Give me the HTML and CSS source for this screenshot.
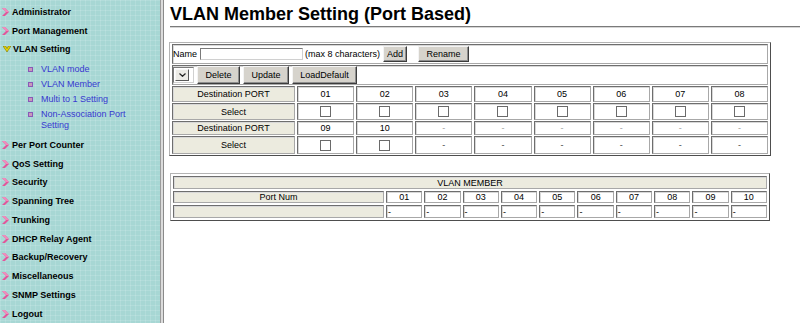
FILE: index.html
```html
<!DOCTYPE html>
<html>
<head>
<meta charset="utf-8">
<title>VLAN Member Setting (Port Based)</title>
<link rel="stylesheet" href="styles.css">
</head>
<body>
<div class="page">
  <nav class="sidebar">
    <ul class="menu">
      <li class="item"><svg class="arrow" viewBox="0 0 7 8" width="7" height="8"><polygon points="0,0 3,0 7,4 3,8 0,8 4,4" fill="#e2569a"/><polygon points="0,0 3,0 7,4 4,4" fill="#f08cbc"/></svg><span>Administrator</span></li>
      <li class="item"><svg class="arrow" viewBox="0 0 7 8" width="7" height="8"><polygon points="0,0 3,0 7,4 3,8 0,8 4,4" fill="#e2569a"/><polygon points="0,0 3,0 7,4 4,4" fill="#f08cbc"/></svg><span>Port Management</span></li>
      <li class="group">
        <div class="item"><svg class="arrow down" viewBox="0 0 8 6" width="8" height="6"><polygon points="0,0 2.6,0 4,2.6 5.4,0 8,0 4,6" fill="#e8da00" stroke="#7a6c00" stroke-width="0.6"/></svg><span>VLAN Setting</span></div>
        <ul class="sub">
          <li class="sub-item"><span class="bullet"></span><span class="sub-text">VLAN mode</span></li>
          <li class="sub-item"><span class="bullet"></span><span class="sub-text">VLAN Member</span></li>
          <li class="sub-item"><span class="bullet"></span><span class="sub-text">Multi to 1 Setting</span></li>
          <li class="sub-item"><span class="bullet"></span><span class="sub-text">Non-Association Port Setting</span></li>
        </ul>
      </li>
      <li class="item"><svg class="arrow" viewBox="0 0 7 8" width="7" height="8"><polygon points="0,0 3,0 7,4 3,8 0,8 4,4" fill="#e2569a"/><polygon points="0,0 3,0 7,4 4,4" fill="#f08cbc"/></svg><span>Per Port Counter</span></li>
      <li class="item"><svg class="arrow" viewBox="0 0 7 8" width="7" height="8"><polygon points="0,0 3,0 7,4 3,8 0,8 4,4" fill="#e2569a"/><polygon points="0,0 3,0 7,4 4,4" fill="#f08cbc"/></svg><span>QoS Setting</span></li>
      <li class="item"><svg class="arrow" viewBox="0 0 7 8" width="7" height="8"><polygon points="0,0 3,0 7,4 3,8 0,8 4,4" fill="#e2569a"/><polygon points="0,0 3,0 7,4 4,4" fill="#f08cbc"/></svg><span>Security</span></li>
      <li class="item"><svg class="arrow" viewBox="0 0 7 8" width="7" height="8"><polygon points="0,0 3,0 7,4 3,8 0,8 4,4" fill="#e2569a"/><polygon points="0,0 3,0 7,4 4,4" fill="#f08cbc"/></svg><span>Spanning Tree</span></li>
      <li class="item"><svg class="arrow" viewBox="0 0 7 8" width="7" height="8"><polygon points="0,0 3,0 7,4 3,8 0,8 4,4" fill="#e2569a"/><polygon points="0,0 3,0 7,4 4,4" fill="#f08cbc"/></svg><span>Trunking</span></li>
      <li class="item"><svg class="arrow" viewBox="0 0 7 8" width="7" height="8"><polygon points="0,0 3,0 7,4 3,8 0,8 4,4" fill="#e2569a"/><polygon points="0,0 3,0 7,4 4,4" fill="#f08cbc"/></svg><span>DHCP Relay Agent</span></li>
      <li class="item"><svg class="arrow" viewBox="0 0 7 8" width="7" height="8"><polygon points="0,0 3,0 7,4 3,8 0,8 4,4" fill="#e2569a"/><polygon points="0,0 3,0 7,4 4,4" fill="#f08cbc"/></svg><span>Backup/Recovery</span></li>
      <li class="item"><svg class="arrow" viewBox="0 0 7 8" width="7" height="8"><polygon points="0,0 3,0 7,4 3,8 0,8 4,4" fill="#e2569a"/><polygon points="0,0 3,0 7,4 4,4" fill="#f08cbc"/></svg><span>Miscellaneous</span></li>
      <li class="item"><svg class="arrow" viewBox="0 0 7 8" width="7" height="8"><polygon points="0,0 3,0 7,4 3,8 0,8 4,4" fill="#e2569a"/><polygon points="0,0 3,0 7,4 4,4" fill="#f08cbc"/></svg><span>SNMP Settings</span></li>
      <li class="item"><svg class="arrow" viewBox="0 0 7 8" width="7" height="8"><polygon points="0,0 3,0 7,4 3,8 0,8 4,4" fill="#e2569a"/><polygon points="0,0 3,0 7,4 4,4" fill="#f08cbc"/></svg><span>Logout</span></li>
    </ul>
  </nav>
  <div class="divider"></div>
  <main class="main">
    <h1 class="title">VLAN Member Setting (Port Based)</h1>
    <hr class="rule">

    <table class="grid grid-setting">
      <colgroup><col class="col-label1"><col span="8"></colgroup>
      <tr class="r1">
        <td colspan="9" class="bar">
          <div class="toolbar">
            <span class="lbl">Name</span>
            <input type="text" class="name-input">
            <span class="hint">(max 8 characters)</span>
            <button class="btn btn-add">Add</button>
            <button class="btn btn-rename">Rename</button>
          </div>
        </td>
      </tr>
      <tr class="r2">
        <td colspan="9" class="bar">
          <div class="toolbar">
            <span class="select-box"><span class="select-btn"><svg viewBox="0 0 7 4" width="7" height="4"><polyline points="0.5,0.5 3.5,3.3 6.5,0.5" fill="none" stroke="#222" stroke-width="1.2"/></svg></span></span>
            <button class="btn btn-delete">Delete</button>
            <button class="btn btn-update">Update</button>
            <button class="btn btn-load">LoadDefault</button>
          </div>
        </td>
      </tr>
      <tr class="r3">
        <td class="label">Destination PORT</td>
        <td>01</td><td>02</td><td>03</td><td>04</td><td>05</td><td>06</td><td>07</td><td>08</td>
      </tr>
      <tr class="r4">
        <td class="label">Select</td>
        <td><input type="checkbox" class="chk"></td>
        <td><input type="checkbox" class="chk"></td>
        <td><input type="checkbox" class="chk"></td>
        <td><input type="checkbox" class="chk"></td>
        <td><input type="checkbox" class="chk"></td>
        <td><input type="checkbox" class="chk"></td>
        <td><input type="checkbox" class="chk"></td>
        <td><input type="checkbox" class="chk"></td>
      </tr>
      <tr class="r5">
        <td class="label">Destination PORT</td>
        <td>09</td><td>10</td>
        <td class="dash-light">-</td><td class="dash-light">-</td><td class="dash-light">-</td><td class="dash-light">-</td><td class="dash-light">-</td><td class="dash-light">-</td>
      </tr>
      <tr class="r6">
        <td class="label">Select</td>
        <td><input type="checkbox" class="chk"></td>
        <td><input type="checkbox" class="chk"></td>
        <td class="dash">-</td><td class="dash">-</td><td class="dash">-</td><td class="dash">-</td><td class="dash">-</td><td class="dash">-</td>
      </tr>
    </table>

    <table class="grid grid-member">
      <colgroup><col class="col-label2"><col span="10"></colgroup>
      <tr class="m1"><td colspan="11" class="label">VLAN MEMBER</td></tr>
      <tr class="m2">
        <td class="label">Port Num</td>
        <td>01</td><td>02</td><td>03</td><td>04</td><td>05</td><td>06</td><td>07</td><td>08</td><td>09</td><td>10</td>
      </tr>
      <tr class="m3">
        <td class="label"></td>
        <td class="left">-</td><td class="left">-</td><td class="left">-</td><td class="left">-</td><td class="left">-</td><td class="left">-</td><td class="left">-</td><td class="left">-</td><td class="left">-</td><td class="left">-</td>
      </tr>
    </table>
  </main>
</div>
</body>
</html>
```

FILE: styles.css
```css
html, body {
  margin: 0;
  padding: 0;
  background: #ffffff;
  font-family: "Liberation Sans", Arial, sans-serif;
  color: #000;
}

.page {
  display: flex;
  min-height: 100vh;
}

/* ---------- sidebar ---------- */
.sidebar {
  flex: none;
  width: 160px;
  box-sizing: border-box;
  padding-top: 2.6px;
  background-color: #a7d7d4;
  background-image:
    linear-gradient(rgba(255, 255, 255, 0.13) 1px, transparent 1px),
    linear-gradient(90deg, rgba(255, 255, 255, 0.13) 1px, transparent 1px);
  background-size: 5px 5px;
}

.menu, .sub {
  list-style: none;
  margin: 0;
  padding: 0;
}

.item {
  display: flex;
  align-items: center;
  height: 18.75px;
  font-size: 9px;
  font-weight: bold;
  color: #000;
  white-space: nowrap;
}

.arrow {
  flex: none;
  margin-left: 2px;
  margin-right: 3px;
  display: block;
}

.arrow.down {
  margin-left: 3px;
  margin-right: 2px;
}

.sub {
  display: flex;
  flex-direction: column;
  gap: 3.8px;
  padding-top: 5.6px;
  padding-bottom: 4.75px;
}

.sub-item {
  display: flex;
  align-items: flex-start;
  font-size: 9px;
  line-height: 11px;
  color: #3838d0;
}

.bullet {
  flex: none;
  width: 5px;
  height: 5px;
  box-sizing: border-box;
  margin: 3px 8px 0 28px;
  background: #c79ab8;
  border: 1px solid #8a58b8;
}

.sub-text {
  max-width: 96px;
}

.divider {
  flex: none;
  width: 4px;
  box-sizing: border-box;
  background: #dcdcdc;
  border-left: 1px solid #9c9c9c;
  border-right: 1px solid #8a8a8a;
}

/* ---------- main ---------- */
.main {
  flex: 1;
  padding-left: 6px;
}

.title {
  margin: 4px 0 0;
  font-size: 18px;
  line-height: 21px;
  font-weight: bold;
}

.rule {
  margin: 1px 0 0;
  height: 0;
  border: 0;
  border-top: 1px solid #7a7a7a;
  border-bottom: 1px solid #d6d6d6;
}

.grid {
  table-layout: fixed;
  border-collapse: separate;
  border-spacing: 2px 1px;
  border: 1px solid;
  border-color: #b4b4b4 #4e4e4e #4e4e4e #b4b4b4;
  font-size: 9px;
}

.grid-setting {
  width: 602px;
  margin: 14px 0 0 -1px;
}

.grid-member {
  width: 600px;
  margin-top: 17px;
  border-spacing: 2px;
}

.col-label1 { width: 123px; }
.col-label2 { width: 211px; }

.grid td {
  box-sizing: border-box;
  padding: 0;
  border: 1px solid;
  border-color: #6e6e6e #a8a8a8 #a8a8a8 #6e6e6e;
  box-shadow: inset 1px 1px 0 #d8d8d8;
  text-align: center;
  vertical-align: middle;
  background: #ffffff;
  white-space: nowrap;
  overflow: hidden;
}

.grid td.bar {
  text-align: left;
}

.grid td.left {
  text-align: left;
  padding-left: 1px;
}

.grid td.label {
  background: #ecebdf;
}

.grid td.dash-light { color: #a0a0a0; }
.grid td.dash { color: #444; }

.r1 { height: 20px; }
.r2 { height: 20px; }
.r3 { height: 16px; }
.r4 { height: 17px; }
.r5 { height: 14px; }
.r6 { height: 18px; }

.m1 { height: 13px; }
.m2 { height: 12px; }
.m3 { height: 13px; }

.toolbar {
  display: flex;
  align-items: center;
}

.lbl {
  margin-right: 3px;
}

.name-input {
  box-sizing: border-box;
  width: 103px;
  height: 12px;
  margin: 0 2px 0 0;
  padding: 0;
  border: 1px solid;
  border-color: #7a7a7a #d0d0d0 #d0d0d0 #7a7a7a;
  background: #fff;
  font-size: 9px;
}

.hint {
  margin-right: 3px;
}

.btn {
  box-sizing: border-box;
  margin: 0;
  padding: 0;
  font-family: "Liberation Sans", Arial, sans-serif;
  font-size: 9px;
  color: #000;
  background: #d6d3cc;
  border: 1px solid;
  border-color: #f4f4f4 #3c3c3c #3c3c3c #f4f4f4;
  box-shadow: inset -1px -1px 0 #8e8e8e;
  text-align: center;
}

.btn-add { width: 24px; height: 16px; }
.btn-rename { width: 51px; height: 16px; margin-left: 11px; }

.r2 .toolbar .btn { height: 18px; margin-left: 3px; }
.btn-delete { width: 43px; }
.btn-update { width: 46px; }
.btn-load { width: 65px; }

.select-box {
  box-sizing: border-box;
  display: flex;
  align-items: center;
  width: 21px;
  height: 16px;
  border: 1px solid;
  border-color: #7a7a7a #d0d0d0 #d0d0d0 #7a7a7a;
  background: #fff;
  padding-left: 1px;
}

.select-btn {
  box-sizing: border-box;
  display: flex;
  align-items: center;
  justify-content: center;
  width: 14px;
  height: 12px;
  background: #ecebe6;
  border: 1px solid;
  border-color: #f8f8f8 #5a5a5a #5a5a5a #f8f8f8;
}

.select-btn svg { display: block; }

.chk {
  -webkit-appearance: none;
  appearance: none;
  display: inline-block;
  box-sizing: border-box;
  width: 11px;
  height: 11px;
  margin: 0;
  vertical-align: middle;
  border: 1px solid #6a6a6a;
  background: #fff;
  border-radius: 0;
}
```
